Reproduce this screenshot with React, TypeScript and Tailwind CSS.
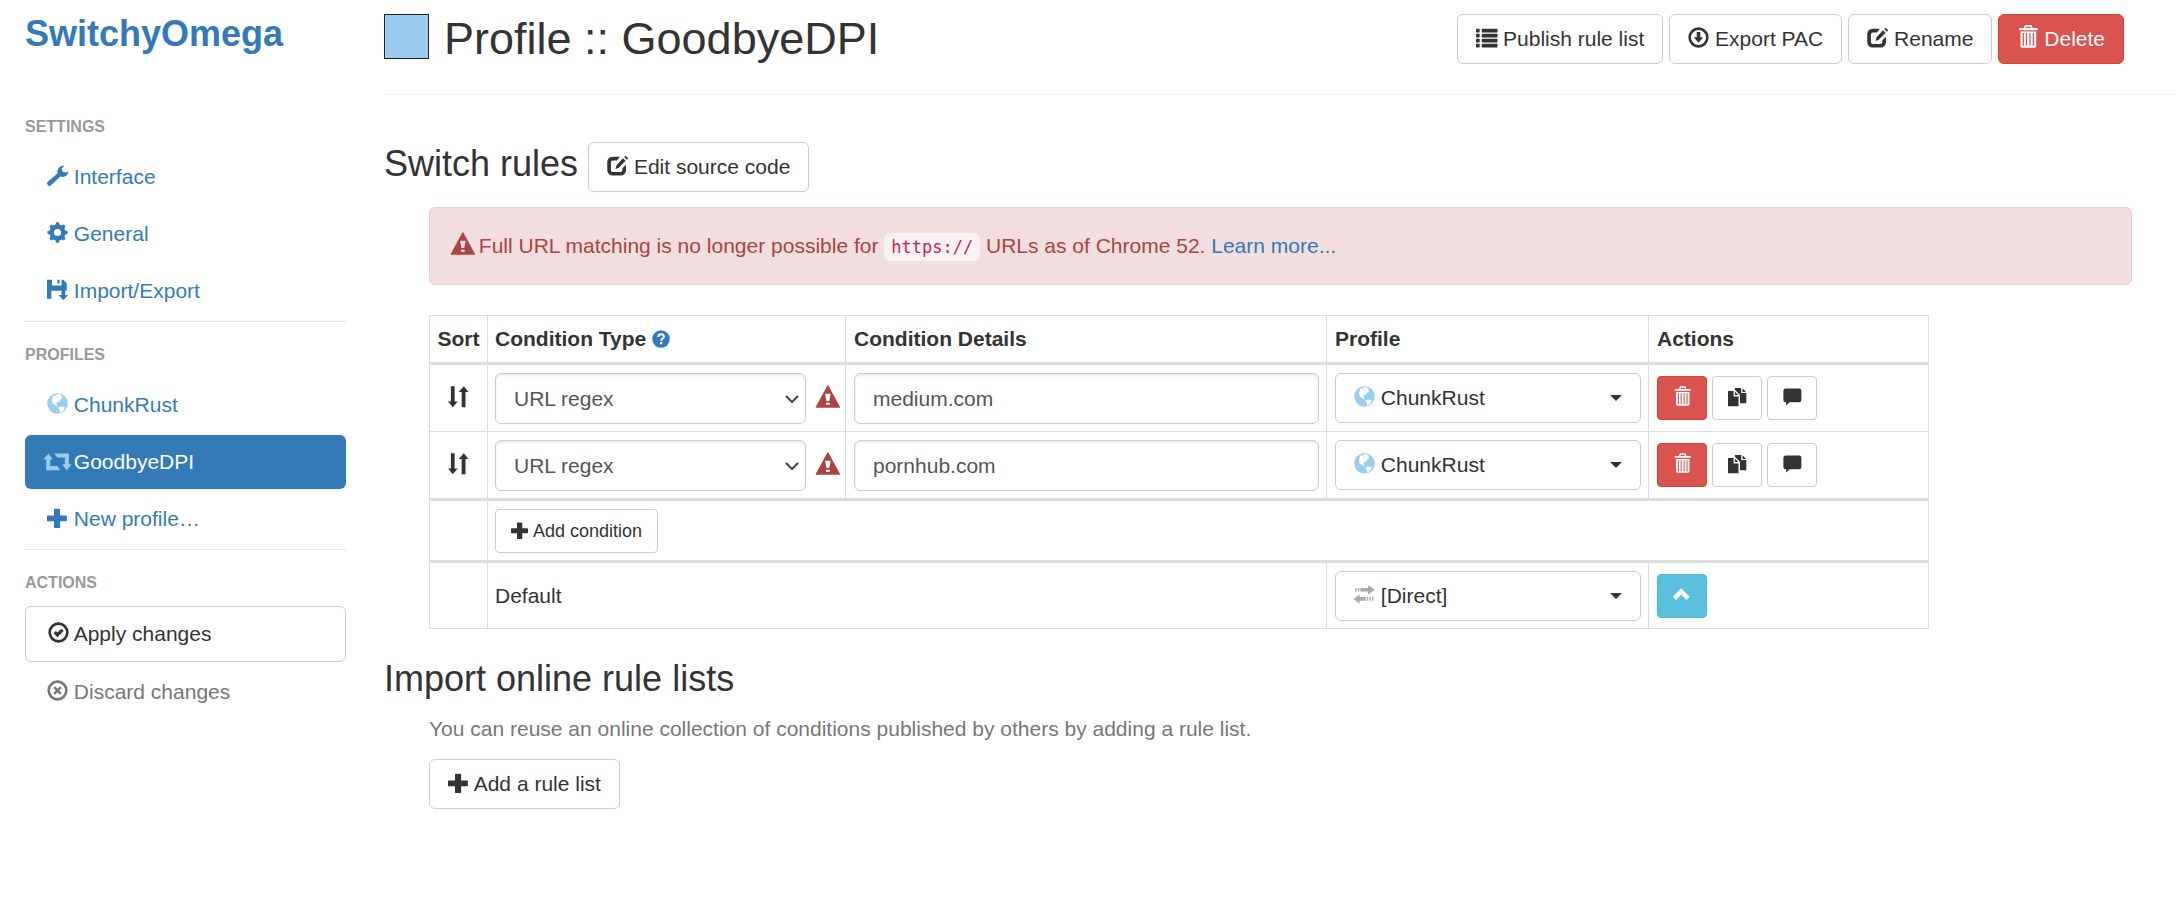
import React, { useState } from "react";
import type { ReactNode } from "react";

type IconProps = { children: ReactNode; size?: "md" | "sm"; className?: string };

function Icon({ children, size = "md", className = "" }: IconProps) {
  return (
    <svg
      viewBox="0 0 24 24"
      fill="currentColor"
      aria-hidden="true"
      className={`inline-block shrink-0 overflow-visible align-[-2px] ${size === "md" ? "size-[21px]" : "size-[18px]"} ${className}`}
    >
      {children}
    </svg>
  );
}

const ring = (
  <path
    fillRule="evenodd"
    d="M12 .4a11.6 11.6 0 1 0 0 23.2A11.6 11.6 0 0 0 12 .4zM12 3.4a8.6 8.6 0 1 1 0 17.2 8.6 8.6 0 0 1 0-17.2z"
  />
);

const glyphs = {
  wrench: (
    <path d="M.6 19.4 12 9.6C11.2 4.600 14.400.5 20 .5L16.600 4.400 18.300 8 22 8.600 24.600 7.200C23.800 12.200 20 14.600 15.300 13.200L4.600 23.200a2.300 2.300 0 0 1-3.200.1l-.9-.9a2.200 2.200 0 0 1 .1-3z" />
  ),
  cog: (
    <>
      <path
        fillRule="evenodd"
        d="M12 2.900a9.100 9.100 0 1 0 0 18.200 9.100 9.100 0 0 0 0-18.200zM12 8a4 4 0 1 1 0 8 4 4 0 0 1 0-8z"
      />
      {[0, 45, 90, 135, 180, 225, 270, 315].map((a) => (
        <path key={a} d="M9.200 4.600 10.500.4h3l1.300 4.200z" transform={`rotate(${a} 12 12)`} />
      ))}
    </>
  ),
  floppy: (
    <path d="M0 .8h5.800v6.700h10.800V.8h2l4 4.400v8.200H20.800V18.200H24.200L18.600 24.400 13.200 18.200h3.400V13.400H5v9.200H0zM11.800.8h2.600v4.200H11.800z" />
  ),
  plus: (
    <path d="M9 2h5a1 1 0 0 1 1 1v6.600h6.700a1 1 0 0 1 1 1v4.800a1 1 0 0 1-1 1H15V23a1 1 0 0 1-1 1H9a1 1 0 0 1-1-1v-6.600H1a1 1 0 0 1-1-1v-4.800a1 1 0 0 1 1-1h7V3a1 1 0 0 1 1-1z" />
  ),
  globe: (
    <>
      <circle cx="12" cy="12" r="11.700" />
      <path
        fill="#fff"
        d="M7.400 2.700 10 3l1-1.300 3-.3 2.600 1.800.6 3-2.500 1.600-.4 2.200-1.700-.4-1.500 1.300-.2 2.600 1.700 1.800-2.600-.9L6.500 12 5.500 8z"
      />
      <path fill="#fff" d="m13 16.600 3.600-1.200 4 1-1.800 3.600-3.600 2.600-.6-2.600z" />
      <path d="m10.500 4.600 2.200-.5-.7 1.300z" />
    </>
  ),
  retweet: (
    <path d="M1.700 4 7 10.800H3.700V18.300H11.500L15.500 23H-.9V10.800h-3.600zM8 4H25v12.200h3.300L22.600 23l-5.400-6.800h3.200V8.700h-8.400z" />
  ),
  okCircle: (
    <>
      {ring}
      <path d="m6.300 12.900 2.600-2.700 1.900 1.800 4.500-4.300 2.600 2.600-7.100 7.200z" />
    </>
  ),
  removeCircle: (
    <>
      {ring}
      <path d="m9.200 7.200 2.800 2.800 2.800-2.800 2 2-2.800 2.800 2.800 2.800-2 2-2.800-2.800-2.800 2.800-2-2 2.800-2.800-2.800-2.800z" />
    </>
  ),
  download: (
    <>
      {ring}
      <path d="M10 5.800h4v6h3.400L12 17.900l-5.400-6.100H10z" />
    </>
  ),
  list: (
    <>
      {[2, 7.700, 13.400, 19.100].map((y) => (
        <g key={y}>
          <rect x="0" y={y} width="4.200" height="4.200" rx=".8" />
          <rect x="6.600" y={y} width="18" height="4.200" rx=".8" />
        </g>
      ))}
    </>
  ),
  edit: (
    <>
      <path d="M14.800 2H6.200A6 6 0 0 0 .3 8v9.500a6 6 0 0 0 6 6h9.400a6 6 0 0 0 6-6v-6.400l-4.200 4v2.300a2 2 0 0 1-2 2H6.500a2 2 0 0 1-2-2V8.200a2 2 0 0 1 2-2h4.700z" />
      <path d="m18.300 3.700 2.900 2.900-7.700 7.900-3.700 1.500 1.100-4.300zM19.700 2.400l1.500-1.500 3.100 2.900-1.700 1.500z" />
    </>
  ),
  trash: (
    <path
      fillRule="evenodd"
      d="M9.300-2.200h7.200l1.600 3.400h5.600v2.600H2.300V1.200h5.400zM10.500-.3 9.700 1.200h6.400l-.8-1.500zM4 5.200h18v16.600a1.800 1.800 0 0 1-1.800 1.800H5.800A1.800 1.800 0 0 1 4 21.800zM6.400 6.900v14.600h1.500V6.900zM10.200 6.900v14.600h1.400V6.900zM14.200 6.900v14.600h1.400V6.900zM18 6.900v14.600h1.500V6.900z"
    />
  ),
  duplicate: (
    <path d="M0 4h7.400v7.200H14V24.200H0zM9.200 4.600 13.600 9.400H9.200zM9.200 0H17.600v6.800h6.800V20.200H16V9.200L9.200 2.200zM19.400.4l4.600 4.800h-4.600z" />
  ),
  comment: (
    <path d="M3.500.8h18a3 3 0 0 1 3 3V16a3 3 0 0 1-3 3H9l-5 4.400L4.400 19H3.500a3 3 0 0 1-3-3V3.800a3 3 0 0 1 3-3z" />
  ),
  chevronUp: <path d="m11 3 11.200 11.300-4.200 4.200-7-6.900-7 6.900-4.200-4.200z" />,
  sort: (
    <path d="M3.300.4h4.300v17.400h3.500L5.500 24.400 0 17.800h3.300zM18 .4l5.500 6.400H20v17.400h-4.400V6.800h-3.300z" />
  ),
  warning: (
    <path
      fillRule="evenodd"
      d="M11.600-1.200a1 1 0 0 1 1.700 0L26.300 22.800a.6.6 0 0 1-.5.900H-1a.6.6 0 0 1-.5-.9zM9.200 7.800l1.600 8.200h3.200l1.600-8.200zM10.300 17.900v2.300h4.300v-2.300z"
    />
  ),
  question: (
    <>
      <circle cx="12" cy="12" r="11.700" />
      <path d="M8.300 9.200C8.300 6.900 9.900 5.700 12.100 5.700s3.800 1.200 3.800 3.100c0 2.600-3.700 2.600-3.700 5.600" fill="none" stroke="#fff" strokeWidth="2.800" />
      <rect x="10.600" y="16.200" width="3.200" height="2.800" fill="#fff" />
    </>
  ),
  direct: (
    <path d="M1.300 4.500h1.600v4.200H1.300zM4.300 4.500H6.200v4.200H4.300zM7.300 4.500h8.700V1.300l8 5.300-8 5.400V8.700H7.300zM-.5 17l6.800-5.400v3.200h7v4.200h-7v3.600zM14.600 14.800h1.600v4.200h-1.600zM17.600 14.800h1.600v4.200h-1.600zM20.600 14.800h1.600v4.200h-1.600z" />
  ),
};

const buttonBase =
  "inline-block cursor-pointer whitespace-nowrap rounded-md border border-[#ccc] bg-white px-[18px] py-[9px] leading-[30px] text-[#333] hover:bg-[#e6e6e6]";
const smallBase = "cursor-pointer whitespace-nowrap rounded border text-lg leading-[27px] py-2 h-11";

function NavItem({ icon, label, iconClass = "", className = "text-[#337ab7] hover:bg-[#eee]" }: { icon: ReactNode; label: string; iconClass?: string; className?: string }) {
  return (
    <li className="mb-[3px]">
      <a href="#" className={`block rounded-md py-3 pl-[22px] pr-4 leading-[30px] ${className}`}>
        <Icon className={iconClass}>{icon}</Icon> {label}
      </a>
    </li>
  );
}

function NavHeader({ children }: { children: ReactNode }) {
  return <h2 className="pt-[21px] pb-[11px] text-base leading-6 font-bold text-[#999] uppercase">{children}</h2>;
}

function ProfileButton({ icon, iconClass, label }: { icon: ReactNode; iconClass: string; label: string }) {
  return (
    <button type="button" aria-haspopup="listbox" className={`${buttonBase} block w-full`}>
      <span className="flex items-center justify-between">
        <span>
          <Icon className={iconClass}>{icon}</Icon> {label}
        </span>
        <svg viewBox="0 0 12 6" aria-hidden="true" className="h-[6px] w-3 fill-[#333]">
          <path d="M0 0h12L6 6z" />
        </svg>
      </span>
    </button>
  );
}

function RuleRow({ id, pattern }: { id: string; pattern: string }) {
  const [value, setValue] = useState(pattern);
  return (
    <tr>
      <td className="border border-[#ddd] text-center">
        <Icon>{glyphs.sort}</Icon>
      </td>
      <td className="border border-[#ddd] px-[7px] pt-2 pb-[7px]">
        <div className="flex items-center justify-between">
          <div className="relative w-[311px]">
            <select
              id={`type-${id}`}
              aria-label="Condition Type"
              className="block h-[51px] w-full appearance-none rounded-md border border-[#ccc] bg-white pr-10 pl-[18px] text-[#555] shadow-[inset_0_2px_2px_rgba(0,0,0,0.075)]"
            >
              <option>URL regex</option>
            </select>
            <svg viewBox="0 0 14 8" aria-hidden="true" className="pointer-events-none absolute top-[22px] right-[7px] h-2 w-3.5 fill-none stroke-[#444] stroke-2">
              <path d="m1 1 6 6 6-6" />
            </svg>
          </div>
          <span className="text-[#a94442]">
            <Icon>{glyphs.warning}</Icon>
          </span>
        </div>
      </td>
      <td className="border border-[#ddd] pt-2 pr-[7px] pb-[7px] pl-2">
        <input
          type="text"
          aria-label="Condition Details"
          value={value}
          onChange={(e) => setValue(e.target.value)}
          className="block h-[51px] w-full rounded-md border border-[#ccc] bg-white px-[18px] text-[#555] shadow-[inset_0_2px_2px_rgba(0,0,0,0.075)]"
        />
      </td>
      <td className="border border-[#ddd] pr-[7px] pl-2">
        <ProfileButton icon={glyphs.globe} iconClass="text-[#99ccee]" label="ChunkRust" />
      </td>
      <td className="border border-[#ddd] px-2">
        <div className="flex gap-[5px]">
          <button type="button" aria-label="Delete" className={`${smallBase} w-[50px] border-[#d43f3a] bg-[#d9534f] text-white`}>
            <Icon size="sm">{glyphs.trash}</Icon>
          </button>
          <button type="button" aria-label="Clone" className={`${smallBase} w-[50px] border-[#ccc] bg-white`}>
            <Icon size="sm">{glyphs.duplicate}</Icon>
          </button>
          <button type="button" aria-label="Note" className={`${smallBase} w-[50px] border-[#ccc] bg-white`}>
            <Icon size="sm">{glyphs.comment}</Icon>
          </button>
        </div>
      </td>
    </tr>
  );
}

export default function App() {
  const [color, setColor] = useState("#99ccee");
  return (
    <div className="flex min-h-screen bg-white font-['Liberation_Sans',Arial,sans-serif] text-[21px] leading-[30px] text-[#333]">
      <nav className="w-[384px] shrink-0 pt-[14px] pr-[38px] pl-[25px]">
        <h1 className="mb-10 text-4xl leading-10 font-bold text-[#337ab7]">
          <a href="#">SwitchyOmega</a>
        </h1>
        <NavHeader>Settings</NavHeader>
        <ul>
          <NavItem icon={glyphs.wrench} label="Interface" />
          <NavItem icon={glyphs.cog} label="General" />
          <NavItem icon={glyphs.floppy} label="Import/Export" />
        </ul>
        <hr className="border-[#e5e5e5]" />
        <NavHeader>Profiles</NavHeader>
        <ul>
          <NavItem icon={glyphs.globe} iconClass="text-[#99ccee]" label="ChunkRust" />
          <NavItem icon={glyphs.retweet} iconClass="text-[#99ccee]" label="GoodbyeDPI" className="bg-[#337ab7] text-white" />
          <NavItem icon={glyphs.plus} label="New profile…" />
        </ul>
        <hr className="border-[#e5e5e5]" />
        <NavHeader>Actions</NavHeader>
        <ul>
          <NavItem icon={glyphs.okCircle} label="Apply changes" className="border border-[#ccc] text-[#333]" />
          <NavItem icon={glyphs.removeCircle} label="Discard changes" className="text-[#777]" />
        </ul>
      </nav>

      <main className="min-w-0 flex-1">
        <header className="flex justify-between border-b border-[#eee] pt-[14px] pr-[52px] pb-[30px]">
          <div className="flex gap-[15px]">
            <input
              type="color"
              aria-label="Profile color"
              value={color}
              onChange={(e) => setColor(e.target.value)}
              className="block size-[45px] cursor-pointer appearance-none border border-[#222] p-0 [&::-webkit-color-swatch]:rounded-none [&::-webkit-color-swatch]:border-0 [&::-webkit-color-swatch-wrapper]:p-0"
            />
            <h2 className="text-[45px] leading-[50px]">Profile :: GoodbyeDPI</h2>
          </div>
          <div className="flex gap-[6px]">
            <button type="button" className={buttonBase}>
              <Icon>{glyphs.list}</Icon> Publish rule list
            </button>
            <button type="button" className={buttonBase}>
              <Icon>{glyphs.download}</Icon> Export PAC
            </button>
            <button type="button" className={buttonBase}>
              <Icon>{glyphs.edit}</Icon> Rename
            </button>
            <button
              type="button"
              className="cursor-pointer rounded-md border border-[#d43f3a] bg-[#d9534f] px-[18px] py-[9px] leading-[30px] whitespace-nowrap text-white"
            >
              <Icon>{glyphs.trash}</Icon> Delete
            </button>
          </div>
        </header>

        <section className="mt-[47px]">
          <div className="flex items-start gap-[10px]">
            <h3 className="text-4xl leading-[44px]">Switch rules</h3>
            <button type="button" className={buttonBase}>
              <Icon>{glyphs.edit}</Icon> Edit source code
            </button>
          </div>
          <div role="alert" className="mt-[15px] mr-11 ml-[45px] rounded-md border border-[#ebccd1] bg-[#f2dede] px-[22px] pt-[23px] pb-[22px] text-[#a94442]">
            <Icon>{glyphs.warning}</Icon> Full URL matching is no longer possible for{" "}
            <code className="rounded-md bg-[#f9f2f4] px-[7px] py-1 font-['DejaVu_Sans_Mono',monospace] text-[17px] text-[#c7254e]">https://</code> URLs as of Chrome 52.{" "}
            <a href="#" className="text-[#337ab7]">
              Learn more...
            </a>
          </div>

          <div className="mt-[30px] mr-11 ml-[45px]">
            <table className="w-full max-w-[1500px] table-fixed border-collapse border border-[#ddd]">
              <colgroup>
                <col className="w-[58px]" />
                <col className="w-[358px]" />
                <col />
                <col className="w-[322px]" />
                <col className="w-[280px]" />
              </colgroup>
              <thead>
                <tr className="border-b-3 border-[#ddd] text-left">
                  <th className="border-x border-[#ddd] py-2 text-center">Sort</th>
                  <th className="border-x border-[#ddd] px-[7px] py-2">
                    Condition Type{" "}
                    <a href="#" aria-label="Help on condition types" className="text-[#337ab7]">
                      <Icon size="sm">{glyphs.question}</Icon>
                    </a>
                  </th>
                  <th className="border-x border-[#ddd] px-2 py-2">Condition Details</th>
                  <th className="border-x border-[#ddd] px-2 py-2">Profile</th>
                  <th className="border-x border-[#ddd] px-2 py-2">Actions</th>
                </tr>
              </thead>
              <tbody>
                <RuleRow id="1" pattern="medium.com" />
                <RuleRow id="2" pattern="pornhub.com" />
              </tbody>
              <tbody className="border-t-3 border-[#ddd]">
                <tr>
                  <td className="border-x border-[#ddd]" />
                  <td colSpan={4} className="border-x border-[#ddd] px-[7px] pt-2 pb-[7px]">
                    <button type="button" className={`${smallBase} block border-[#ccc] bg-white px-[15px]`}>
                      <Icon size="sm">{glyphs.plus}</Icon> Add condition
                    </button>
                  </td>
                </tr>
              </tbody>
              <tbody className="border-t-3 border-[#ddd]">
                <tr>
                  <td className="border-x border-[#ddd]" />
                  <td colSpan={2} className="border-x border-[#ddd] px-[7px]">
                    Default
                  </td>
                  <td className="border-x border-[#ddd] pt-2 pr-[7px] pb-[7px] pl-2">
                    <ProfileButton icon={glyphs.direct} iconClass="text-[#aaa]" label="[Direct]" />
                  </td>
                  <td className="border-x border-[#ddd] px-2">
                    <button type="button" aria-label="Move up" className={`${smallBase} block w-[50px] border-[#46b8da] bg-[#5bc0de] text-white`}>
                      <Icon size="sm">{glyphs.chevronUp}</Icon>
                    </button>
                  </td>
                </tr>
              </tbody>
            </table>
          </div>
        </section>

        <section className="mt-[30px]">
          <h3 className="text-4xl leading-10">Import online rule lists</h3>
          <div className="mt-[15px] ml-[45px]">
            <p className="mb-[15px] text-[#777]">You can reuse an online collection of conditions published by others by adding a rule list.</p>
            <button type="button" className={buttonBase}>
              <Icon>{glyphs.plus}</Icon> Add a rule list
            </button>
          </div>
        </section>
      </main>
    </div>
  );
}
